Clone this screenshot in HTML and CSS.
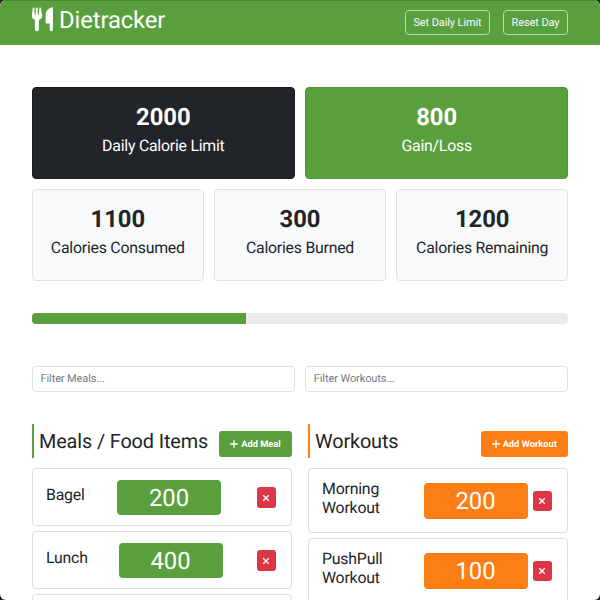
FILE: index.html
```html
<!DOCTYPE html>
<html lang="en">
<head>
<meta charset="utf-8">
<title>Dietracker</title>
<link rel="stylesheet" href="styles.css">
</head>
<body>
<svg class="symbols" width="0" height="0" aria-hidden="true">
  <symbol id="plus" viewBox="0 0 8 8"><path d="M4 .2v7.6M.2 4h7.6" stroke="currentColor" stroke-width="1.3" fill="none"/></symbol>
  <symbol id="cross" viewBox="0 0 8 8"><path d="M1.2 1.2l5.6 5.6M6.8 1.2l-5.6 5.6" stroke="currentColor" stroke-width="1.3" fill="none"/></symbol>
</svg>
<div class="window">
  <nav class="navbar">
    <div class="brand">
      <svg class="logo" viewBox="0 0 22 25" fill="currentColor"><path d="M.9.8Q1.6.1 2.2.8L2.8 8h.8L3.9.8Q4.8.1 5.7.8L6 8h.8L7.4.8Q8.1.1 8.8.8L10.1 8.2Q10.6 11.6 6.9 12.8V22.8Q6.9 24.2 4.9 24.2T2.9 22.8V12.8Q-.7 11.6-.2 8.2ZM20.9 1V22.8Q20.9 24.2 19.3 24.2T17.7 22.8V16.5H14.4Q13.6 16.5 13.6 15.7V8.2Q13.6 2.2 19.8.2 20.9 0 20.9 1Z"/></svg>
      <span class="brand-name">Dietracker</span>
    </div>
    <div class="nav-actions">
      <button class="btn-outline limit">Set Daily Limit</button>
      <button class="btn-outline reset">Reset Day</button>
    </div>
  </nav>
  <main class="container">
    <section class="row stats two">
      <div class="card dark"><h2>2000</h2><p>Daily Calorie Limit</p></div>
      <div class="card green"><h2>800</h2><p>Gain/Loss</p></div>
    </section>
    <section class="row stats three">
      <div class="card light"><h2>1100</h2><p>Calories Consumed</p></div>
      <div class="card light"><h2>300</h2><p>Calories Burned</p></div>
      <div class="card light"><h2>1200</h2><p>Calories Remaining</p></div>
    </section>
    <div class="progress"><div class="bar"></div></div>
    <section class="row two filters">
      <input type="text" placeholder="Filter Meals...">
      <input type="text" placeholder="Filter Workouts...">
    </section>
    <section class="lists">
      <div class="list meals">
        <header><h3>Meals / Food Items</h3><button class="add"><svg><use href="#plus"/></svg>Add Meal</button></header>
        <div class="item"><h4>Bagel</h4><div class="amount">200</div><button class="delete"><svg><use href="#cross"/></svg></button></div>
        <div class="item"><h4>Lunch</h4><div class="amount">400</div><button class="delete"><svg><use href="#cross"/></svg></button></div>
        <div class="item"></div>
      </div>
      <div class="list workouts">
        <header><h3>Workouts</h3><button class="add"><svg><use href="#plus"/></svg>Add Workout</button></header>
        <div class="item"><h4>Morning<br>Workout</h4><div class="amount">200</div><button class="delete"><svg><use href="#cross"/></svg></button></div>
        <div class="item"><h4>PushPull<br>Workout</h4><div class="amount">100</div><button class="delete"><svg><use href="#cross"/></svg></button></div>
      </div>
    </section>
  </main>
</div>
</body>
</html>
```
FILE: styles.css
```css
* { box-sizing: border-box; }
html { background: #222; }
body { margin: 0; font-family: Roboto, sans-serif; color: #212529; overflow: hidden; text-rendering: geometricPrecision; }
h2, h3, h4, p { margin: 0; font-weight: 400; }
button, input { font-family: inherit; margin: 0; text-rendering: inherit; }
svg { display: block; }
.symbols { position: absolute; }
.window { height: 600px; overflow: hidden; background: #fff; border-radius: 6px; }

.navbar { height: 44.5px; padding: 0 32px; background: #5a9f3d; color: #fff; display: flex; justify-content: space-between; border-top: 1px solid #4d8636; }
.brand { display: flex; padding-top: 5.5px; }
.logo { width: 22px; height: 25px; }
.brand-name { font-size: 23.8px; line-height: 28px; margin: -1px 0 0 5px; letter-spacing: -0.1px; }
.nav-actions { display: flex; gap: 13px; padding-top: 9px; }
.btn-outline { height: 25px; padding: 0; border: 1px solid #b9d6ad; border-radius: 4px; background: none; color: #f8f9fa; font-size: 11px; letter-spacing: -0.1px; }
.limit { width: 85px; }
.reset { width: 65px; }

.container { padding: 42.6px 32px 0; }
.row { display: grid; gap: 10.6px; }
.two { grid-template-columns: repeat(2, 1fr); }
.three { grid-template-columns: repeat(3, 1fr); margin-top: 10.2px; }
.card { height: 92px; padding-top: 14.5px; text-align: center; border: 1px solid #dfe2e5; border-radius: 4px; }
.card h2 { font-size: 23.8px; line-height: 28px; font-weight: 700; }
.card p { font-size: 15.85px; line-height: 20px; margin-top: 5px; letter-spacing: -0.23px; }
.dark { background: #212529; border-color: #191c20; color: #fff; }
.green { background: #5a9f3d; border-color: #51943a; color: #fff; }
.light { background: #f8f9fb; }

.progress { margin-top: 32px; height: 10.6px; border-radius: 4px; overflow: hidden; background: #e9ecef; }
.bar { width: 40%; height: 100%; background: #5a9f3d; }

.filters { margin-top: 42px; }
.filters input { width: 100%; height: 26px; padding: 0 7.5px; border: 1px solid #dee2e6; border-radius: 4px; font-size: 11px; letter-spacing: -0.1px; background: #fff; }
.filters input::placeholder { color: #747b82; opacity: 1; }

.lists { display: flex; gap: 16px; margin-top: 32.2px; }
.list { width: 260px; }
.list header { height: 34px; display: flex; justify-content: space-between; border-left: 2px solid var(--accent); padding-left: 5px; margin-bottom: 10.4px; }
.meals { --accent: #5a9f3d; }
.workouts { --accent: #fd7e14; }
.list h3 { font-size: 19.85px; line-height: 35px; letter-spacing: -0.12px; white-space: nowrap; }
.add { align-self: flex-end; height: 26px; margin: 0 0 1px; padding: 0; width: 73px; justify-content: center; display: flex; align-items: center; gap: 3px; border: 0; border-radius: 3px; background: var(--accent); color: #fff; font-size: 9.3px; font-weight: 700; white-space: nowrap; }
.workouts .add { width: 87.5px; }
.add svg { width: 8px; height: 8px; }
.item { display: flex; height: 58px; margin-bottom: 5px; padding: 10.4px 15.5px 0 13px; border: 1px solid #dfdfdf; border-radius: 4px; }
.item h4 { width: 71px; font-size: 15.85px; line-height: 18.4px; padding-top: 6.5px; letter-spacing: -0.2px; }
.item:nth-child(3) h4 { width: 72.5px; }
.amount { width: 104px; height: 35.5px; border-radius: 4px; background: var(--accent); color: #fff; font-size: 23.8px; line-height: 36px; text-align: center; }
.delete { width: 19px; height: 20.5px; margin: 7.5px 0 0 auto; padding: 0; display: flex; align-items: center; justify-content: center; border: 0; border-radius: 3px; background: #dc3545; color: #fff; }
.delete svg { width: 8px; height: 8px; }
.workouts .item { height: 65px; padding-top: 14px; }
.workouts .item h4, .workouts .item:nth-child(3) h4 { padding-top: 0; margin-top: -3px; width: 101.5px; }
```
